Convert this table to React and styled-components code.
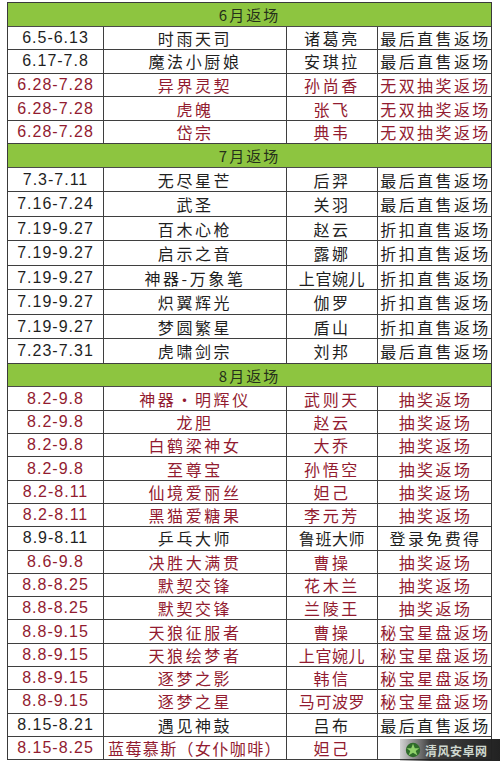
import styled, { createGlobalStyle } from "styled-components";

const GlobalStyle = createGlobalStyle`
  html, body {
    margin: 0;
    padding: 0;
    background: #ffffff;
    overflow: hidden;
  }
  body {
    font-family: "Noto Sans CJK SC", "Noto Sans", sans-serif;
  }
`;

const BLACK = "#1f1f1f";
const RED = "#921b30";

const sections = [
  {
    title: "6月返场",
    rowHeight: 23.6,
    rows: [
      ["6.5-6.13", "时雨天司", "诸葛亮", "最后直售返场", 0],
      ["6.17-7.8", "魔法小厨娘", "安琪拉", "最后直售返场", 0],
      ["6.28-7.28", "异界灵契", "孙尚香", "无双抽奖返场", 1],
      ["6.28-7.28", "虎魄", "张飞", "无双抽奖返场", 1],
      ["6.28-7.28", "岱宗", "典韦", "无双抽奖返场", 1],
    ],
  },
  {
    title: "7月返场",
    rowHeight: 24.5,
    rows: [
      ["7.3-7.11", "无尽星芒", "后羿", "最后直售返场", 0],
      ["7.16-7.24", "武圣", "关羽", "最后直售返场", 0],
      ["7.19-9.27", "百木心枪", "赵云", "折扣直售返场", 0],
      ["7.19-9.27", "启示之音", "露娜", "折扣直售返场", 0],
      ["7.19-9.27", "神器-万象笔", "上官婉儿", "折扣直售返场", 0],
      ["7.19-9.27", "炽翼辉光", "伽罗", "折扣直售返场", 0],
      ["7.19-9.27", "梦圆繁星", "盾山", "折扣直售返场", 0],
      ["7.23-7.31", "虎啸剑宗", "刘邦", "最后直售返场", 0],
    ],
  },
  {
    title: "8月返场",
    rowHeight: 23.3,
    rows: [
      ["8.2-9.8", "神器·明辉仪", "武则天", "抽奖返场", 1],
      ["8.2-9.8", "龙胆", "赵云", "抽奖返场", 1],
      ["8.2-9.8", "白鹤梁神女", "大乔", "抽奖返场", 1],
      ["8.2-9.8", "至尊宝", "孙悟空", "抽奖返场", 1],
      ["8.2-8.11", "仙境爱丽丝", "妲己", "抽奖返场", 1],
      ["8.2-8.11", "黑猫爱糖果", "李元芳", "抽奖返场", 1],
      ["8.9-8.11", "乒乓大师", "鲁班大师", "登录免费得", 0],
      ["8.6-9.8", "决胜大满贯", "曹操", "抽奖返场", 1],
      ["8.8-8.25", "默契交锋", "花木兰", "抽奖返场", 1],
      ["8.8-8.25", "默契交锋", "兰陵王", "抽奖返场", 1],
      ["8.8-9.15", "天狼征服者", "曹操", "秘宝星盘返场", 1],
      ["8.8-9.15", "天狼绘梦者", "上官婉儿", "秘宝星盘返场", 1],
      ["8.8-9.15", "逐梦之影", "韩信", "秘宝星盘返场", 1],
      ["8.8-9.15", "逐梦之星", "马可波罗", "秘宝星盘返场", 1],
      ["8.15-8.21", "遇见神鼓", "吕布", "最后直售返场", 0],
      ["8.15-8.25", "蓝莓慕斯（女仆咖啡）", "妲己", "", 1],
    ],
  },
];

function App() {
  return (
    <>
      <GlobalStyle />
      <Page>
        <Table>
          {sections.map((section) => (
            <div key={section.title}>
              <SectionHeader>{section.title}</SectionHeader>
              {section.rows.map(([date, skin, hero, kind, red], i) => (
                <Row key={section.title + i} $h={section.rowHeight} $red={red}>
                  <DateCell>{date}</DateCell>
                  <SkinCell $tight={skin.length > 8}>{skin}</SkinCell>
                  <HeroCell $tight={hero.length > 3}>{hero}</HeroCell>
                  <KindCell>{kind}</KindCell>
                </Row>
              ))}
            </div>
          ))}
        </Table>
        <Watermark>
          <Leaf viewBox="0 0 20 20">
            <circle cx="10" cy="10" r="8" fill="#2f6b2a" />
            <path d="M10 3 L12 8 L17 8 L13 11 L15 16 L10 13 L5 16 L7 11 L3 8 L8 8 Z" fill="#8fd16a" />
          </Leaf>
          <MarkText>清风安卓网</MarkText>
        </Watermark>
      </Page>
    </>
  );
}

export default App;

const Page = styled.div`
  position: relative;
  width: 500px;
  height: 761px;
  padding: 2px 0 0 7px;
  box-sizing: border-box;
  overflow: hidden;
`;

const Table = styled.div`
  width: 485px;
  border: 1.5px solid #3a3a3a;
  border-bottom: none;
  box-sizing: border-box;
`;

const SectionHeader = styled.div`
  height: 23.5px;
  background: #8dc540;
  border-bottom: 1.5px solid #4b4b4b;
  display: flex;
  align-items: center;
  justify-content: center;
  font-size: 15px;
  letter-spacing: 2px;
  color: #25301a;
  box-sizing: border-box;
`;

const Row = styled.div`
  display: grid;
  grid-template-columns: 96px 183px 91px 1fr;
  height: ${(p) => p.$h}px;
  border-bottom: 1.5px solid #3f3f3f;
  box-sizing: border-box;
  color: ${(p) => (p.$red ? RED : BLACK)};
`;

const Cell = styled.div`
  display: flex;
  align-items: center;
  justify-content: center;
  border-right: 1.5px solid #3f3f3f;
  white-space: nowrap;
  overflow: hidden;
  font-size: 16px;
  line-height: 1;
`;

const DateCell = styled(Cell)`
  font-family: "Liberation Sans", "Noto Sans", sans-serif;
  font-size: 16px;
  letter-spacing: 1px;
`;

const SkinCell = styled(Cell)`
  letter-spacing: ${(p) => (p.$tight ? "1.4px" : "2.6px")};
`;

const HeroCell = styled(Cell)`
  letter-spacing: ${(p) => (p.$tight ? "0.6px" : "2.6px")};
`;

const KindCell = styled(Cell)`
  border-right: none;
  letter-spacing: 2.4px;
  padding-left: 2px;
`;

const Watermark = styled.div`
  position: absolute;
  right: 0;
  bottom: 0;
  width: 100px;
  height: 22px;
  display: flex;
  align-items: center;
  gap: 3px;
  padding-left: 4px;
  box-sizing: border-box;
  background: linear-gradient(90deg, rgba(40, 40, 40, 0.2) 0%, rgba(30, 30, 30, 0.85) 30%, #222 100%);
`;

const Leaf = styled.svg`
  width: 18px;
  height: 18px;
  flex: none;
`;

const MarkText = styled.span`
  font-size: 12px;
  font-weight: 700;
  color: #cfd8cf;
  letter-spacing: 0.5px;
`;
